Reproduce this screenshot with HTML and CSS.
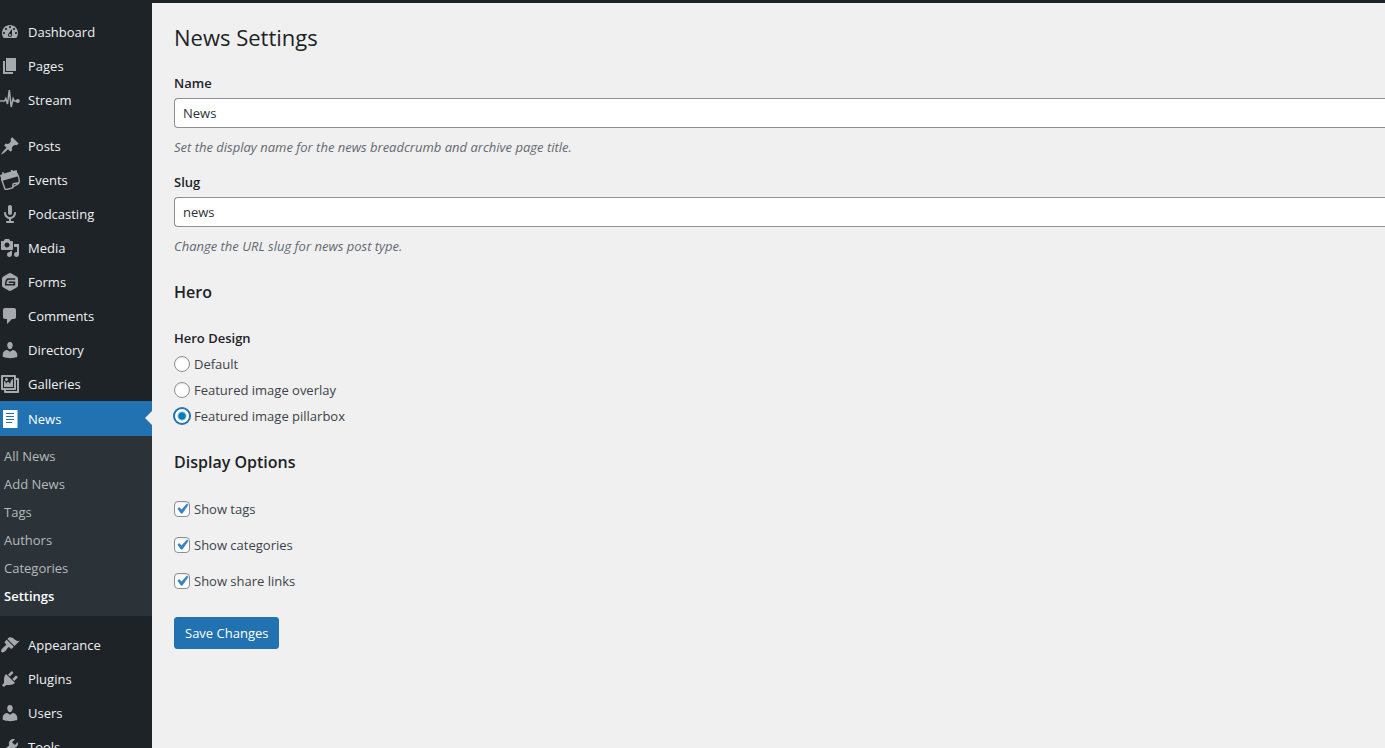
FILE: index.html
```html
<!DOCTYPE html>
<html lang="en">
<head>
  <meta charset="UTF-8" />
  <meta name="viewport" content="width=device-width, initial-scale=1.0"/>
  <title>News Settings</title>
  <link rel="stylesheet" href="styles.css">
</head>
<body>

  <nav class="admin-menu">
    <ul class="menu">
      <li><a href="#"><svg viewBox="0 0 20 20"><path d="M3.76 16h12.48c1.1-1.37 1.76-3.11 1.76-5 0-4.42-3.58-8-8-8s-8 3.58-8 8c0 1.89.66 3.63 1.76 5zM10 4c.55 0 1 .45 1 1s-.45 1-1 1-1-.45-1-1 .45-1 1-1zM6 6c.55 0 1 .45 1 1s-.45 1-1 1-1-.45-1-1 .45-1 1-1zm8 0c.55 0 1 .45 1 1s-.45 1-1 1-1-.45-1-1 .45-1 1-1zm-5.370 5.550L12 7v6c0 1.100-.9 2-2 2s-2-.9-2-2c0-.57.24-1.080.63-1.450zM4 10c.55 0 1 .45 1 1s-.45 1-1 1-1-.45-1-1 .45-1 1-1zm12 0c.55 0 1 .45 1 1s-.45 1-1 1-1-.45-1-1 .45-1 1-1zm-5 3c0-.55-.45-1-1-1s-1 .45-1 1 .45 1 1 1 1-.45 1-1z" fill-rule="evenodd"/></svg>Dashboard</a></li>
      <li><a href="#"><svg viewBox="0 0 20 20"><path d="M6 15V2h10v13H6zm-1 1h8v2H3V5h2v11z"/></svg>Pages</a></li>
      <li><a href="#"><svg viewBox="0 0 20 20"><path d="M0 11h4.500l1.300-2.500 1.700 5.500L9.300 0l1.900 17 1.900-8.500 1.200 2.500H18" fill="none" stroke="currentColor" stroke-width="1.500"/><circle cx="17.800" cy="11" r="2"/></svg>Stream</a></li>
      <li class="separator"></li>
      <li><a href="#"><svg viewBox="0 0 20 20"><path d="M10.440 3.020l1.820-1.820 6.360 6.350-1.830 1.820c-1.050-.68-2.480-.57-3.410.36l-.75.75c-.92.93-1.040 2.350-.35 3.410l-1.830 1.820-2.410-2.410-2.800 2.790c-.42.42-3.380 2.710-3.800 2.290s1.860-3.390 2.280-3.810l2.790-2.790L4.100 9.360l1.830-1.820c1.050.69 2.480.57 3.400-.36l.75-.75c.93-.92 1.050-2.350.36-3.410z"/></svg>Posts</a></li>
      <li><a href="#"><svg viewBox="0 0 20 20"><path d="M0 5l2.300-.8-.3-1.700 1.400-.5.800 1.600 6.800-2.200-.2-1.500 1.500-.4.700 1.600 3.600-1 1.500 6.200L1.700 11z"/><path d="M1.500 9l3.700 10.800 7.300-1.900c1.300-3 3.800-1.800 6.500-5.200 1-3-.4-6.200-1.800-9.200M12.500 17.900c.8-1.700-.3-3.200 1-4.300 1.500-.9 3.500.2 5.500-.9" fill="none" stroke="currentColor" stroke-width="1.400"/></svg>Events</a></li>
      <li><a href="#"><svg viewBox="0 0 20 20"><path d="M12 9V3c0-1.100-.89-2-2-2-1.120 0-2 .94-2 2v6c0 1.100.9 2 2 2 1.130 0 2-.94 2-2zm4 0c0 2.970-2.160 5.430-5 5.910V17h2c.56 0 1 .45 1 1s-.44 1-1 1H7c-.55 0-1-.45-1-1s.45-1 1-1h2v-2.090C6.170 14.430 4 11.970 4 9c0-.55.45-1 1-1 .56 0 1 .45 1 1 0 2.210 1.800 4 4 4 2.210 0 4-1.790 4-4 0-.55.45-1 1-1 .56 0 1 .45 1 1z"/></svg>Podcasting</a></li>
      <li><a href="#"><svg viewBox="0 0 20 20"><path d="M13 11V4c0-.55-.45-1-1-1h-1.670L9 1H5L3.670 3H2c-.55 0-1 .45-1 1v7c0 .55.45 1 1 1h10c.55 0 1-.45 1-1zM7 4.500c1.380 0 2.500 1.120 2.500 2.500S8.380 9.500 7 9.500 4.500 8.380 4.500 7 5.620 4.500 7 4.500zM14 6h5v10.500c0 1.380-1.120 2.500-2.500 2.500S14 17.880 14 16.500s1.120-2.500 2.500-2.500c.17 0 .34.020.5.050V9h-3V6zm-4 8.050V13h2v3.500c0 1.380-1.120 2.500-2.500 2.500S7 17.880 7 16.500 8.120 14 9.500 14c.17 0 .34.020.5.050z" fill-rule="evenodd"/></svg>Media</a></li>
      <li><a href="#"><svg viewBox="0 0 20 20"><path d="M8.600 1.400Q10 .6 11.400 1.400l5.200 3Q18 5.200 18 6.600v6.800q0 1.400-1.400 2.200l-5.200 3q-1.400.8-2.800 0l-5.200-3Q2 14.800 2 13.400V6.600q0-1.400 1.400-2.200zM15.200 6.200H8.400q-1.500 0-2.300 1.300Q4.800 9.800 4.800 13.600h10.400V9.500H8.700v1.600h4.700v.9H6.500q.1-2.500 1.100-3.700.4-.5 1.200-.5h6.400z" fill-rule="evenodd"/></svg>Forms</a></li>
      <li><a href="#"><svg viewBox="0 0 20 20"><path d="M5 2h9c1.100 0 2 .9 2 2v7c0 1.100-.9 2-2 2h-2l-5 5v-5H5c-1.100 0-2-.9-2-2V4c0-1.100.9-2 2-2z"/></svg>Comments</a></li>
      <li><a href="#"><svg viewBox="0 0 20 20"><path d="M10 9.250c-2.270 0-2.730-3.440-2.730-3.440C7 4.020 7.820 2 9.970 2c2.160 0 2.980 2.020 2.710 3.810 0 0-.41 3.440-2.680 3.440zm0 2.570L12.720 10c2.390 0 4.520 2.330 4.520 4.530v2.490s-3.650 1.130-7.240 1.130c-3.650 0-7.240-1.130-7.240-1.130v-2.490c0-2.250 1.940-4.480 4.470-4.480z"/></svg>Directory</a></li>
      <li><a href="#"><svg viewBox="0 0 20 20"><path d="M16 4h1.960c.57 0 1.040.47 1.040 1.040v12.920c0 .57-.47 1.040-1.040 1.040H5.040C4.470 19 4 18.530 4 17.960V16H2.040C1.470 16 1 15.530 1 14.960V2.040C1 1.470 1.470 1 2.040 1h12.920c.57 0 1.040.47 1.040 1.040V4zM3 14h11V3H3v11zm5-8.500C8 4.670 7.330 4 6.500 4S5 4.670 5 5.500 5.670 7 6.500 7 8 6.330 8 5.500zm2 4.500s1-5 3-5v8H4V7c2 0 2 3 2 3s.33-2 2-2 2 2 2 2zm7 7V6h-1v8.960c0 .57-.47 1.040-1.040 1.040H6v1h11z" fill-rule="evenodd"/></svg>Galleries</a></li>
      <li class="current">
        <a href="#"><svg viewBox="0 0 20 20"><path d="M3 1h14.500v18H3zM6 4v1h8V4zm0 3v1h8V7zm0 3v1h8v-1zm0 3v1h6v-1z" fill-rule="evenodd"/></svg>News</a>
        <ul class="submenu">
          <li><a href="#">All News</a></li>
          <li><a href="#">Add News</a></li>
          <li><a href="#">Tags</a></li>
          <li><a href="#">Authors</a></li>
          <li><a href="#">Categories</a></li>
          <li><a href="#" class="active">Settings</a></li>
        </ul>
      </li>
      <li class="separator"></li>
      <li><a href="#"><svg viewBox="0 0 20 20"><path d="M14.480 11.060L7.410 3.990l1.500-1.500c.5-.56 2.300-.47 3.510.32 1.210.8 1.430 1.280 2.910 2.100 1.180.64 2.450 1.260 4.450.85zm-.71.71L6.700 4.700 4.930 6.470c-.39.39-.39 1.020 0 1.410l1.060 1.060c.39.39.39 1.030 0 1.420-.6.6-1.430 1.110-2.210 1.690-.35.26-.7.53-1.010.84C1.430 14.230.4 16.080 1.400 17.070c.99 1 2.840-.03 4.180-1.360.31-.31.58-.66.85-1.020.57-.78 1.080-1.610 1.690-2.210.39-.39 1.020-.39 1.410 0l1.060 1.060c.39.39 1.020.39 1.410 0z"/></svg>Appearance</a></li>
      <li><a href="#"><svg viewBox="0 0 20 20"><path d="M13.110 4.360L9.870 7.600 8 5.730l3.240-3.240c.35-.34 1.050-.2 1.560.32.52.51.66 1.210.31 1.550zm-8 1.770l.91-1.120 9.010 9.010-1.190.84c-.71.71-2.630 1.160-3.820 1.160H6.140L4.900 17.260c-.59.59-1.540.59-2.120 0-.59-.58-.59-1.530 0-2.120l1.240-1.240v-3.880c0-1.130.4-3.190 1.090-3.890zm7.260 3.970l3.240-3.240c.34-.35 1.040-.21 1.550.31.52.51.66 1.210.31 1.550l-3.240 3.250z"/></svg>Plugins</a></li>
      <li><a href="#"><svg viewBox="0 0 20 20"><path d="M10 9.250c-2.270 0-2.730-3.440-2.730-3.440C7 4.020 7.820 2 9.970 2c2.160 0 2.980 2.020 2.710 3.810 0 0-.41 3.440-2.680 3.440zm0 2.570L12.720 10c2.390 0 4.520 2.330 4.520 4.530v2.490s-3.650 1.130-7.240 1.130c-3.650 0-7.240-1.130-7.240-1.130v-2.490c0-2.250 1.940-4.480 4.470-4.480z"/></svg>Users</a></li>
      <li><a href="#"><svg viewBox="0 0 20 20"><path d="M16.680 9.770c-1.340 1.340-3.300 1.670-4.950.99l-5.410 6.520c-.99.99-2.590.99-3.580 0s-.99-2.590 0-3.570l6.520-5.420c-.68-1.650-.35-3.610.99-4.950 1.280-1.280 3.120-1.620 4.720-1.060l-2.890 2.890 2.820 2.820 2.860-2.870c.53 1.580.18 3.390-1.080 4.650z"/></svg>Tools</a></li>
    </ul>
  </nav>

  <main class="content">
    <h1>News Settings</h1>
    <form class="settings">
      <div class="field">
        <label for="name">Name</label>
        <input type="text" id="name" value="News">
        <p class="description">Set the display name for the news breadcrumb and archive page title.</p>
      </div>
      <div class="field">
        <label for="slug">Slug</label>
        <input type="text" id="slug" value="news">
        <p class="description">Change the URL slug for news post type.</p>
      </div>

      <h2>Hero</h2>
      <fieldset class="radios">
        <legend>Hero Design</legend>
        <label><input type="radio" name="hero">Default</label>
        <label><input type="radio" name="hero">Featured image overlay</label>
        <label><input type="radio" name="hero" class="focused" checked>Featured image pillarbox</label>
      </fieldset>

      <h2>Display Options</h2>
      <div class="checks">
        <label><input type="checkbox" checked>Show tags</label>
        <label><input type="checkbox" checked>Show categories</label>
        <label><input type="checkbox" checked>Show share links</label>
      </div>

      <button type="button">Save Changes</button>
    </form>
  </main>

</body>
</html>
```

FILE: styles.css
```css
* {
  box-sizing: border-box;
}

body {
  margin: 0;
  height: 100vh;
  overflow: hidden;
  display: flex;
  font-family: "Open Sans", "Segoe UI", sans-serif;
  font-size: 13px;
  line-height: 20px;
  color: #3c434a;
  background-color: #f0f0f0;
  border-top: 3px solid #1d2327;
}

/* Sidebar */
.admin-menu {
  flex: 0 0 152px;
  padding-top: 12px;
  background-color: #1d2327;
}

.menu,
.submenu {
  list-style: none;
  margin: 0;
  padding: 0;
}

.menu a {
  display: flex;
  align-items: center;
  gap: 8px;
  height: 34px;
  font-size: 13px;
  color: #f0f0f1;
  text-decoration: none;
}

.menu svg {
  width: 20px;
  height: 20px;
  fill: currentColor;
  color: #a7aaad;
}

.menu .separator {
  height: 12px;
}

.menu .current > a {
  position: relative;
  height: 35px;
  color: #fff;
  background-color: #2271b1;
}

.menu .current > a svg {
  color: #fff;
}

.menu .current > a::after {
  content: "";
  position: absolute;
  right: 0;
  top: 10px;
  border: 7px solid transparent;
  border-left-width: 0;
  border-right-color: #f0f0f0;
}

.submenu {
  padding: 6px 0;
  background-color: #2c3338;
}

.submenu a {
  height: 28px;
  padding-left: 4px;
  color: #b5b9bc;
}

.submenu .active {
  font-weight: 600;
  color: #fff;
}

/* Settings page */
.content {
  flex: 1;
  padding: 20px 0 20px 22px;
}

h1 {
  margin: 0 0 22px;
  font-size: 22px;
  font-weight: 400;
  line-height: 28px;
  color: #1d2327;
}

h2 {
  margin: 24px 0;
  font-size: 16px;
  font-weight: 600;
  line-height: 24px;
  color: #1d2327;
}

.field + .field {
  margin-top: 15px;
}

.field label,
legend {
  display: block;
  padding: 0;
  font-weight: 600;
  color: #1d2327;
}

.field input {
  display: block;
  width: 100%;
  height: 30px;
  margin-top: 5px;
  padding: 0 8px;
  font: inherit;
  color: #2c3338;
  background-color: #fff;
  border: 1px solid #8c8f94;
  border-right: 0;
  border-radius: 4px 0 0 4px;
}

.description {
  margin: 9px 0 0;
  font-style: italic;
  color: #646970;
}

.radios {
  margin: 0;
  padding: 0;
  border: 0;
}

.radios legend {
  margin-bottom: 3px;
}

.radios label,
.checks label {
  display: flex;
  align-items: center;
  gap: 4px;
  height: 26px;
}

.radios + h2 {
  margin: 21px 0 17px;
}

.checks label {
  height: 36px;
}

input[type="radio"],
input[type="checkbox"] {
  appearance: none;
  width: 16px;
  height: 16px;
  margin: 0;
  background-color: #fff;
  border: 1px solid #8c8f94;
  border-radius: 4px;
  box-shadow: inset 0 1px 2px rgba(0, 0, 0, 0.1);
}

input[type="radio"] {
  border-radius: 50%;
}

input[type="radio"]:checked {
  background-image: radial-gradient(circle, #007cba 3px, transparent 5px);
}

input[type="radio"].focused {
  border-color: #2271b1;
  box-shadow: 0 0 0 1px #2271b1;
}

input[type="checkbox"]:checked {
  background-image: url("data:image/svg+xml,%3Csvg xmlns='http://www.w3.org/2000/svg' viewBox='0 0 20 20'%3E%3Cpath d='M14.830 4.890l1.340.94-5.810 8.380H9.020L5.780 9.670l1.340-1.250 2.570 2.400z' fill='%233582c4' stroke='%233582c4' stroke-width='.6'/%3E%3C/svg%3E");
  background-position: center;
  background-size: 20px 20px;
}

button {
  display: block;
  height: 32px;
  margin-top: 18px;
  padding: 0 10px;
  font: inherit;
  color: #fff;
  background-color: #2271b1;
  border: 1px solid #2271b1;
  border-radius: 3px;
  cursor: pointer;
}
```
